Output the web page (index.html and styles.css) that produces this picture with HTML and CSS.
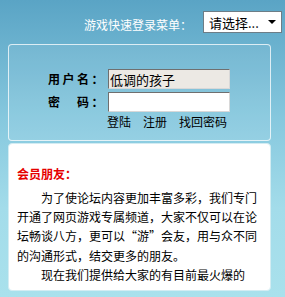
FILE: index.html
```html
<!DOCTYPE html>
<html lang="zh-CN">
<head>
    <meta charset="UTF-8">
    <meta name="viewport" content="width=device-width, initial-scale=1.0">
    <title>游戏快速登录</title>
    <link rel="stylesheet" href="styles.css">
</head>
<body>
    <div class="topbar">
        <span class="menu-label">游戏快速登录菜单：</span>
        <div class="select">
            <span>请选择...</span>
            <span class="arrow"></span>
        </div>
    </div>

    <div class="login">
        <form class="login-form">
            <label class="label" for="username">用户名：</label>
            <input class="field field-filled" type="text" id="username" value="低调的孩子">

            <label class="label" for="password">密　码：</label>
            <input class="field" type="password" id="password">

            <div class="links">
                <a href="#">登陆</a>
                <a href="#">注册</a>
                <a href="#">找回密码</a>
            </div>
        </form>
    </div>

    <div class="notice">
        <h3>会员朋友：</h3>
        <p>为了使论坛内容更加丰富多彩，我们专门开通了网页游戏专属频道，大家不仅可以在论坛畅谈八方，更可以“游”会友，用与众不同的沟通形式，结交更多的朋友。</p>
        <p>现在我们提供给大家的有目前最火爆的</p>
    </div>
</body>
</html>
```

FILE: styles.css
```css
body {
    margin: 0;
    width: 285px;
    height: 297px;
    overflow: hidden;
    font-family: "Noto Sans CJK SC", "Liberation Sans", sans-serif;
    font-size: 12px;
    background: linear-gradient(to bottom, #5aa4c5 0%, #86c8de 40%, #a3dcea 70%, #a9e1ec 100%);
}

.topbar {
    height: 44px;
    display: flex;
    justify-content: flex-end;
    align-items: center;
    padding-right: 3px;
    box-sizing: border-box;
}

.menu-label {
    color: #fff;
    padding-top: 5px;
    margin-right: 11px;
}

.select {
    width: 79px;
    height: 22px;
    box-sizing: border-box;
    background: #fff;
    border: 1px solid #6d7d86;
    display: flex;
    align-items: center;
    justify-content: space-between;
    padding: 0 5px 0 5px;
    font-size: 13px;
    color: #000;
}

.arrow {
    width: 0;
    height: 0;
    border-left: 4px solid transparent;
    border-right: 4px solid transparent;
    border-top: 4px solid #000;
}

.login {
    margin-left: 8px;
    width: 263px;
    height: 97px;
    box-sizing: border-box;
    border: 1px solid rgba(255, 255, 255, 0.75);
    border-radius: 4px;
    background: rgba(255, 255, 255, 0.07);
}

.login-form {
    display: grid;
    grid-template-columns: 60px 122px;
    grid-template-rows: 20px 20px 14px;
    row-gap: 3px;
    padding: 24px 0 0 39px;
    margin: 0;
}

.label {
    font-weight: bold;
    letter-spacing: 2.5px;
    color: #000;
    line-height: 20px;
}

.field {
    width: 122px;
    height: 20px;
    box-sizing: border-box;
    margin: 0;
    padding: 0 1px;
    font-family: "Noto Sans CJK SC", sans-serif;
    font-size: 13px;
    border: 1px solid;
    border-color: #6f6f6f #d8d8d8 #d8d8d8 #6f6f6f;
    background: #fff;
    outline: none;
}

.field-filled {
    background: #ece9e4;
}

.links {
    grid-column: 2;
    margin-left: -1px;
    line-height: 14px;
    display: flex;
    gap: 12px;
}

.links a {
    color: #000;
    text-decoration: none;
}

.notice {
    margin: 2px 0 0 8px;
    width: 263px;
    height: 148px;
    box-sizing: border-box;
    background: #fff;
    border: 1px solid #d3ecf2;
    border-radius: 4px;
    padding: 20px 0 0 8px;
    overflow: hidden;
}

.notice h3 {
    margin: 0 0 4px 0;
    font-size: 12px;
    line-height: 20px;
    color: #e50000;
}

.notice p {
    margin: 0;
    width: 241px;
    text-indent: 2em;
    line-height: 19.2px;
    color: #000;
}
```
